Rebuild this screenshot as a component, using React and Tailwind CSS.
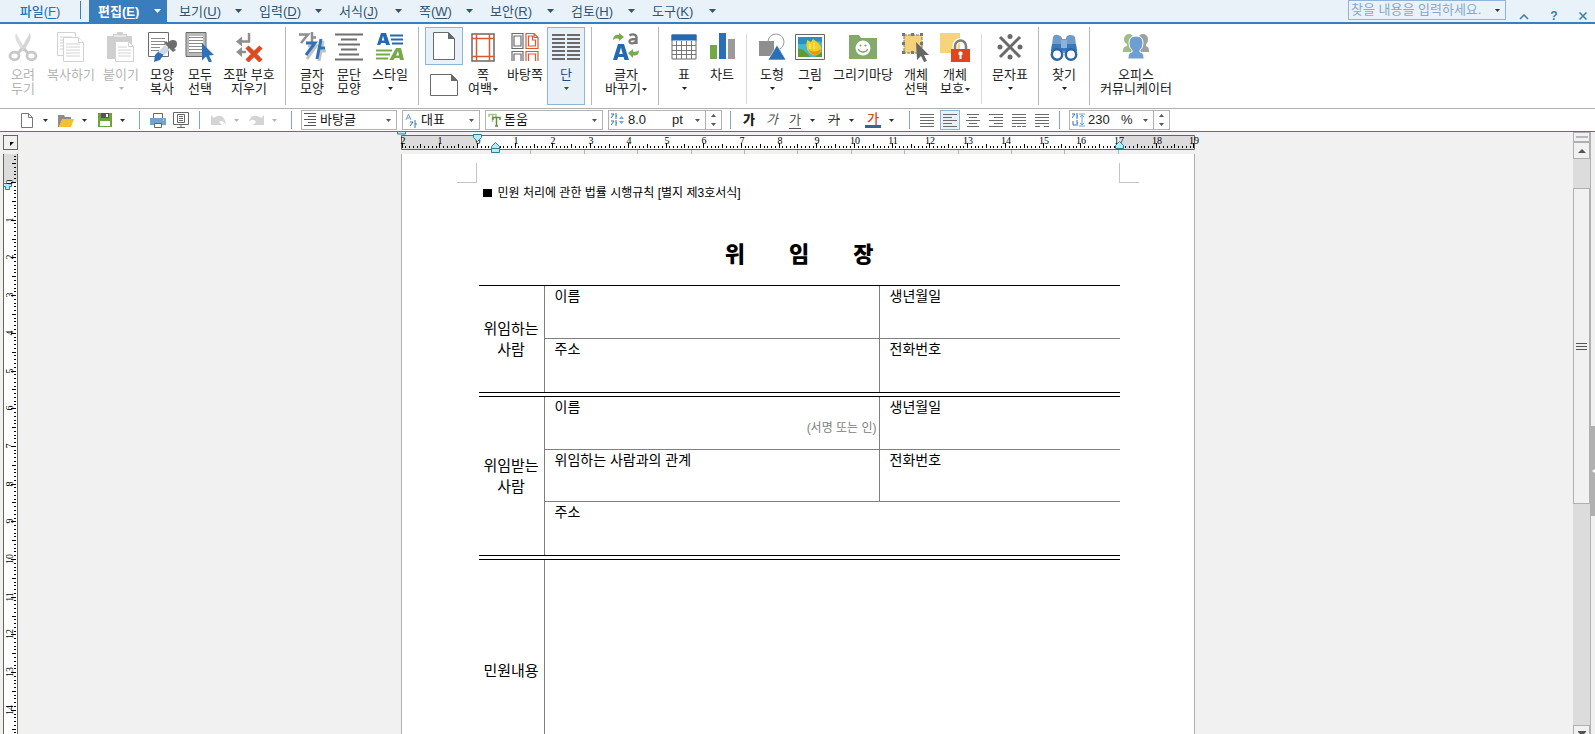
import React, { useState } from 'react';

const CM = 37.7;

const Caret = ({ className = 'text-[#333]' }) => (
    <svg width="5" height="3" viewBox="0 0 5 3" className={`shrink-0 ${className}`}>
        <path d="M0 0h5L2.5 3z" fill="currentColor" />
    </svg>
);

/* ---------- ribbon icons ---------- */

const icons = {
    cut: (
        <svg width="30" height="30" viewBox="0 0 30 30" fill="none">
            <path d="M8 1q-2 4 1 9l5 9 3-2z" fill="#dedede" />
            <path d="M22 1q2 4-1 9l-5 9-3-2z" fill="#d6d6d6" />
            <path d="M14 17l-4 4M16 17l4 4" stroke="#c8c8c8" strokeWidth="3" />
            <ellipse cx="6.500" cy="24" rx="4.500" ry="3.800" stroke="#c8c8c8" strokeWidth="2.800" />
            <ellipse cx="23.500" cy="24" rx="4.500" ry="3.800" stroke="#c8c8c8" strokeWidth="2.800" />
        </svg>
    ),
    copy: (
        <svg width="28" height="30" viewBox="0 0 28 30" fill="#fff" stroke="#d2d2d2">
            <path d="M.5.5h18v23H.5z" />
            <path d="M3 5h12M3 8h12M3 11h12M3 14h12M3 17h12" />
            <path d="M6.500 5.500h15l5 5v19h-20z" />
            <path d="M21.500 5.500v5h5M9 12h14M9 15h14M9 18h14M9 21h14M9 24h14" />
        </svg>
    ),
    paste: (
        <svg width="28" height="30" viewBox="0 0 28 30">
            <path d="M0 4h6V2h4a3 3 0 0 1 6 0h4v2h5v8H9v15H0z" fill="#cfcfcf" />
            <path d="M7 4h12" stroke="#fff" />
            <path d="M8.500 9.500h13l5 5v15h-18z" fill="#fff" stroke="#d2d2d2" />
            <path d="M21.500 9.500v5h5M11 15h9M11 18h13M11 21h13M11 24h13" stroke="#d2d2d2" fill="none" />
        </svg>
    ),
    brush: (
        <svg width="30" height="30" viewBox="0 0 30 30">
            <path d="M1.500.5h20v24h-20z" fill="#fff" stroke="#6a6a6a" />
            <path d="M4 6.500h14M4 9.500h14M4 12.500h14M4 15.500h9M4 18.500h8" stroke="#8a8a8a" />
            <path d="M7 30l1-7 4-4h7l-6 9z" fill="#2f6fb5" />
            <path d="M11 20l7-7 5 5-6 5z" fill="#cdd9e6" />
            <path d="M17 11l2-2 10 9-3 2z" fill="#6d6d6d" />
            <path d="M21 12q1-4 5-4t4 4-4 5z" fill="#6d6d6d" />
        </svg>
    ),
    selectAll: (
        <svg width="30" height="30" viewBox="0 0 30 30">
            <path d="M1 .5h20v24H1z" fill="#b9b9b9" stroke="#6a6a6a" />
            <path d="M4 4h14v17H4z" fill="#fff" />
            <path d="M4 5.500h14M4 8.500h14M4 11.500h14M4 14.500h14M4 17.500h14M4 20.500h14" stroke="#8a8a8a" />
            <path d="M17 11l12 12-5 .5 3 6-3 1-3-6-4 4z" fill="#2f72b8" />
        </svg>
    ),
    clearMarks: (
        <svg width="28" height="30" viewBox="0 0 28 30">
            <path d="M1 9.500l6-5v10zM1 20l6-5v10z" fill="#8f8f8f" />
            <path d="M14 1v8.500H5M5 20h6" stroke="#8f8f8f" strokeWidth="2.500" fill="none" />
            <path d="M12 15l14 14M26 15L12 29" stroke="#dd4a1f" strokeWidth="4.500" />
        </svg>
    ),
    charShape: (
        <svg width="30" height="30" viewBox="0 0 30 30">
            <path d="M2 2.500h9L4 11M15 0v13M15 5.500h4" stroke="#8f8f8f" strokeWidth="2.500" fill="none" />
            <path d="M11 14h8l-9 13M26 9l-4 20M23 19h6" stroke="#c3c3c3" strokeWidth="3" fill="none" />
            <path d="M9 11h9L9 23M24 7l-4 20M22 16h6" stroke="#2f72b8" strokeWidth="3" fill="none" />
        </svg>
    ),
    paraShape: (
        <svg width="28" height="30" viewBox="0 0 28 30">
            <path d="M0 2.500h28M6 7.500h16M3 12.500h22M6 17.500h16M4 22.500h20M0 27.500h28" stroke="#6f6f6f" strokeWidth="2" />
        </svg>
    ),
    style: (
        <svg width="28" height="30" viewBox="0 0 28 30">
            <path fillRule="evenodd" d="M5 1h5l4 12h-4l-.6-2H5l-.7 2H1zM7 4L5.800 8.500h2.600z" fill="#2569b0" />
            <path d="M14 3.500h13M15 7.500h12M16 11.500h11" stroke="#2569b0" strokeWidth="2" />
            <path fillRule="evenodd" d="M20 16h5l3 12h-4l-.6-2h-4.500l-1.500 2h-4zM22 19l-2 4.500h3z" fill="#78a94a" />
            <path d="M0 18.500h16M0 22.500h14M0 26.500h12" stroke="#78a94a" strokeWidth="2" />
        </svg>
    ),
    margin: (
        <svg width="24" height="30" viewBox="0 0 24 30" fill="none">
            <path d="M1 2h22v27H1z" stroke="#6a6a6a" strokeWidth="1.500" />
            <path d="M5.500 2v27M18.500 2v27M1 6.500h22M1 24.500h22" stroke="#d85a35" strokeWidth="1.500" />
        </svg>
    ),
    master: (
        <svg width="28" height="30" viewBox="0 0 28 30" fill="none" strokeWidth="1.200">
            <path d="M1 1.500h11v15H1zM3 4h7v10H3zM1 29V19.500h11V29M3 29v-7h7v7" stroke="#6a6a6a" />
            <path d="M15 1.500h8l4 4v11H15zM17.500 4h4v4h3v6h-7zM23 1.500v4h4M15 29V19.500h12V29M17.500 29v-7h7v7" stroke="#d85a35" />
        </svg>
    ),
    columns: (
        <svg width="28" height="30" viewBox="0 0 28 30">
            <path d="M0 3h13M0 7h13M0 11h13M0 15h13M0 19h13M0 23h13M0 27h13M15 3h13M15 7h13M15 11h13M15 15h13M15 19h13M15 23h13M15 27h13" stroke="#6a6a6a" strokeWidth="2" />
        </svg>
    ),
    replace: (
        <svg width="28" height="30" viewBox="0 0 28 30">
            <path fillRule="evenodd" d="M6 12h6l5 16h-4.500l-1-3H6.200l-1 3H1zM9 15.500L7.200 22h3.500z" fill="#2569b0" />
            <path d="M1 8c0-4 3-6 6-5V1l5 4-5 4V7C4 6 2 7 1 8zM27 18c0 5-3 6-6 5.500V26l-5-5 5-4v2.500c3 .5 5 0 6-1.500z" fill="#78a94a" />
            <path d="M17.500 3.500c3-2 7-1 7 2V12M24 7c-4 0-6.500.5-6.500 2.500s4 3 6.500 0" stroke="#777" strokeWidth="2.300" fill="none" />
        </svg>
    ),
    table: (
        <svg width="26" height="30" viewBox="0 0 26 30" fill="none">
            <path d="M1 3h24v24H1z" fill="#fff" stroke="#6a6a6a" />
            <path d="M.5 2.500h25v6H.5z" fill="#2569b0" />
            <path d="M5.500 9v18M10.500 9v18M15.500 9v18M20.500 9v18M1 13.500h24M1 18.500h24M1 22.500h24" stroke="#777" />
        </svg>
    ),
    chart: (
        <svg width="26" height="30" viewBox="0 0 26 30">
            <path d="M1 13h7v14H1z" fill="#76a746" />
            <path d="M10 1h7v26h-7z" fill="#2a70b6" />
            <path d="M19 7h7v20h-7z" fill="#9a9a9a" />
        </svg>
    ),
    shapes: (
        <svg width="28" height="30" viewBox="0 0 28 30">
            <circle cx="18" cy="10" r="8" fill="#fff" stroke="#9a9a9a" />
            <path d="M1 9h15v15H1z" fill="#8f8f8f" />
            <path d="M19 13l9 15H10z" fill="#2a70b6" stroke="#fff" strokeWidth=".6" />
        </svg>
    ),
    picture: (
        <svg width="30" height="30" viewBox="0 0 30 30">
            <path d="M.5 2.500h29v25H.5z" fill="#fff" stroke="#666" />
            <path d="M3 5h24v20H3z" fill="#45b8cc" />
            <path d="M3 5h24v5c-8-2-14 3-24 2z" fill="#2b8fc4" />
            <path d="M3 25v-8c4-1 7 2 12 8zM20 25l7-5v5z" fill="#5f9a36" />
            <path d="M12 8l4 2 2-3 4 3 2 2q3 3 2 7c-2 5-7 5-10 3q-6-4-4-14z" fill="#f7cf1f" />
            <path d="M13 17q6 5 13 0-1 6-6 6-5-1-7-6z" fill="#e9950f" />
            <path d="M15 12v5M19 11v6" stroke="#fff3a0" />
        </svg>
    ),
    gallery: (
        <svg width="28" height="30" viewBox="0 0 28 30">
            <path d="M0 3h10l2 3h16v21H0z" fill="#84a96c" />
            <circle cx="14" cy="16" r="7.500" fill="#fff" />
            <circle cx="11.500" cy="13.500" r="1.100" fill="#84a96c" />
            <circle cx="16.500" cy="13.500" r="1.100" fill="#84a96c" />
            <path d="M9.500 17c1 4 8 4 9 0" stroke="#84a96c" strokeWidth="1.300" fill="none" />
        </svg>
    ),
    objSelect: (
        <svg width="28" height="30" viewBox="0 0 28 30">
            <path d="M2 3h18v18H2z" fill="#f3d27a" stroke="#777" strokeDasharray="3 1" />
            <path d="M0 1h3v3H0zM9 1h3v3H9zM18 1h3v3h-3zM0 10h3v3H0zM18 10h3v3h-3zM0 19h3v3H0zM9 19h3v3H9z" fill="#777" />
            <path d="M14 10l13 13h-5l3 6-3 1-3-6-4 4z" fill="#666" />
        </svg>
    ),
    objLock: (
        <svg width="30" height="30" viewBox="0 0 30 30">
            <path d="M0 1h20v20H0z" fill="#f5d47c" />
            <path d="M15 18v-4a5.500 5.500 0 0 1 11 0v4" stroke="#fff" strokeWidth="5" fill="none" />
            <path d="M15 19v-5a5.500 5.500 0 0 1 11 0v5" stroke="#7d7d7d" strokeWidth="2.500" fill="none" />
            <path d="M11 17h19v13H11z" fill="#e2441b" />
            <path d="M20.500 19.500a2 2 0 0 1 1 3.800V27h-2v-3.700a2 2 0 0 1 1-3.800z" fill="#fff" />
        </svg>
    ),
    symbols: (
        <svg width="26" height="30" viewBox="0 0 26 30">
            <path d="M3 5l20 20M23 5L3 25" stroke="#6a6a6a" strokeWidth="3" />
            <g fill="#6a6a6a">
                <circle cx="13" cy="4.500" r="2.500" />
                <circle cx="13" cy="25" r="2.500" />
                <circle cx="3" cy="15" r="2.500" />
                <circle cx="23" cy="15" r="2.500" />
            </g>
        </svg>
    ),
    find: (
        <svg width="28" height="30" viewBox="0 0 28 30">
            <path d="M3 5q1-3 5-2t4 4h4q0-4 4-4t5 2l2 16H1z" fill="#6f9bc9" />
            <path d="M2 12h24l1 7H1z" fill="#3a78b8" />
            <path d="M11 8h6v8h-6z" fill="#8db1d8" />
            <circle cx="7" cy="22.500" r="5.200" fill="#fff" stroke="#2b66a6" strokeWidth="2.500" />
            <circle cx="21" cy="22.500" r="5.200" fill="#fff" stroke="#2b66a6" strokeWidth="2.500" />
        </svg>
    ),
    people: (
        <svg width="28" height="30" viewBox="0 0 28 30">
            <path d="M7 2a5 5 0 0 1 5 5q0 4-2 5v8H1c0-5 1-5 4-6v-2q-3-1-3-5a5 5 0 0 1 5-5z" fill="#9fbf87" />
            <path d="M21 2a5 5 0 0 1 5 5q0 4-2 5v2c2 1 3 1 3 6h-9v-8q-2-1-2-5a5 5 0 0 1 5-5z" fill="#a0a0a0" />
            <path d="M14 4q7 0 7 7 0 5-3 7v2c3 1 4 2 4 7H6c0-5 1-6 4-7v-2q-3-2-3-7 0-7 7-7z" fill="#6e9fd0" stroke="#fff" />
        </svg>
    ),
};

/* ---------- data ---------- */

const menus = [
    { name: '보기', key: 'U', width: 'w-20' },
    { name: '입력', key: 'D', width: 'w-20' },
    { name: '서식', key: 'J', width: 'w-20' },
    { name: '쪽', key: 'W', width: 'w-[71px]' },
    { name: '보안', key: 'R', width: 'w-[81px]' },
    { name: '검토', key: 'H', width: 'w-[81px]' },
    { name: '도구', key: 'K', width: 'w-[81px]' },
];

const editGroup = [
    { icon: 'cut', lines: ['오려', '두기'], width: 'w-[46px]', disabled: true },
    { icon: 'copy', lines: ['복사하기'], width: 'w-[50px]', disabled: true },
    { icon: 'paste', lines: ['붙이기'], width: 'w-[50px]', disabled: true, caret: 'below' },
    { icon: 'brush', lines: ['모양', '복사'], width: 'w-8' },
    { icon: 'selectAll', lines: ['모두', '선택'], width: 'w-11' },
    { icon: 'clearMarks', lines: ['조판 부호', '지우기'], width: 'w-[54px]' },
];

const shapeGroup = [
    { icon: 'charShape', lines: ['글자', '모양'], width: 'w-9' },
    { icon: 'paraShape', lines: ['문단', '모양'], width: 'w-[38px]' },
    { icon: 'style', lines: ['스타일'], width: 'w-11', caret: 'below' },
];

const pageGroup = [
    { icon: 'margin', lines: ['쪽', '여백'], width: 'w-10', caret: 'inline' },
    { icon: 'master', lines: ['바탕쪽'], width: 'w-11' },
    { icon: 'columns', lines: ['단'], width: 'w-[38px]', caret: 'below', active: true },
];

const objectGroup = [
    { icon: 'shapes', lines: ['도형'], width: 'w-10', caret: 'below' },
    { icon: 'picture', lines: ['그림'], width: 'w-9', caret: 'below' },
    { icon: 'gallery', lines: ['그리기마당'], width: 'w-[70px]' },
    { icon: 'objSelect', lines: ['개체', '선택'], width: 'w-9' },
    { icon: 'objLock', lines: ['개체', '보호'], width: 'w-[42px]', caret: 'inline' },
];

/* ---------- ribbon ---------- */

function RibbonButton({ icon, lines, width, caret, disabled, active }) {
    const color = disabled ? 'text-[#b4b4b4]' : active ? 'text-[#1f4e79]' : 'text-[#222]';
    return (
        <button
            type="button"
            disabled={disabled}
            className={`h-[78px] shrink-0 flex flex-col items-center border text-[13px] leading-[14px] whitespace-nowrap ${width} ${color} ${active ? 'bg-[#e9f1f8] border-[#8fb4d6]' : 'border-transparent'}`}
        >
            <span className="mt-1 mb-[6px] h-[30px] flex items-center">{icons[icon]}</span>
            {lines.map((line, i) => (
                <span key={line} className="flex items-center gap-px">
                    {line}
                    {caret === 'inline' && i === lines.length - 1 && <Caret />}
                </span>
            ))}
            {caret === 'below' && (
                <span className="h-3 flex items-center">
                    <Caret className="" />
                </span>
            )}
        </button>
    );
}

const RibbonGroup = ({ items, className = '' }) => (
    <div className={`flex shrink-0 ${className}`}>
        {items.map((item) => <RibbonButton key={item.icon} {...item} />)}
    </div>
);

const Divider = () => <div className="w-px h-[78px] shrink-0 bg-[#b8b8b8]" />;
const LightDivider = () => <div className="w-px h-[70px] mt-[7px] shrink-0 bg-[#d8d8d8]" />;

function Ribbon() {
    return (
        <div className="h-[84px] pt-[3px] flex items-start bg-white">
            <RibbonGroup items={editGroup} className="pr-[9px]" />
            <Divider />
            <RibbonGroup items={shapeGroup} className="pl-2 pr-[6px]" />
            <Divider />
            <div className="flex shrink-0 px-[6px]">
                <div className="w-[38px] flex flex-col items-center">
                    <button type="button" aria-label="세로" className="w-[38px] h-[38px] flex items-center justify-center bg-[#e9f1f8] border border-[#8fb4d6]">
                        <svg width="22" height="28" viewBox="0 0 22 28">
                            <path d="M.5.5h15l6 6v21H.5z" fill="#fff" stroke="#6a6a6a" />
                            <path d="M15 0v7h7z" fill="#6a6a6a" />
                        </svg>
                    </button>
                    <button type="button" aria-label="가로" className="w-[38px] h-10 flex items-center justify-center">
                        <svg width="28" height="22" viewBox="0 0 28 22">
                            <path d="M.5.5h21l6 6v15H.5z" fill="#fff" stroke="#6a6a6a" />
                            <path d="M21 0v7h7z" fill="#6a6a6a" />
                        </svg>
                    </button>
                </div>
                <RibbonGroup items={pageGroup} />
            </div>
            <Divider />
            <RibbonGroup items={[{ icon: 'replace', lines: ['글자', '바꾸기'], width: 'w-[54px]', caret: 'inline' }]} className="pl-[7px] pr-[5px]" />
            <Divider />
            <RibbonGroup
                items={[
                    { icon: 'table', lines: ['표'], width: 'w-10', caret: 'below' },
                    { icon: 'chart', lines: ['차트'], width: 'w-9' },
                ]}
                className="pl-[5px] pr-[6px]"
            />
            <LightDivider />
            <RibbonGroup items={objectGroup} className="px-[5px]" />
            <LightDivider />
            <RibbonGroup items={[{ icon: 'symbols', lines: ['문자표'], width: 'w-11', caret: 'below' }]} className="px-[6px]" />
            <Divider />
            <RibbonGroup items={[{ icon: 'find', lines: ['찾기'], width: 'w-10', caret: 'below' }]} className="px-[5px]" />
            <Divider />
            <RibbonGroup items={[{ icon: 'people', lines: ['오피스', '커뮤니케이터'], width: 'w-20' }]} className="pl-[6px]" />
        </div>
    );
}

/* ---------- menu bar ---------- */

const BigCaret = () => (
    <svg width="7" height="4" viewBox="0 0 7 4" className="shrink-0">
        <path d="M0 0h7L3.500 4z" fill="currentColor" />
    </svg>
);

const MenuLabel = ({ name, hotkey }) => (
    <span className="pt-[2px]">{name}(<span className="underline underline-offset-2">{hotkey}</span>)</span>
);

function MenuBar() {
    return (
        <nav className="h-6 flex items-start bg-[#eaf2f9] border-b-2 border-[#3a7dbd] text-[13px] leading-5 text-[#2f5573]">
            <button type="button" className="w-20 h-[22px] flex items-center justify-center text-[#2273b8] font-medium">
                <MenuLabel name="파일" hotkey="F" />
            </button>
            <div className="w-px h-[18px] mt-px bg-[#3a7dbd]" />
            <button type="button" className="ml-2 mr-[9px] w-[78px] h-[22px] pl-[9px] pr-[6px] flex items-center justify-between bg-[#3a7dbd] text-white font-bold">
                <MenuLabel name="편집" hotkey="E" />
                <BigCaret />
            </button>
            {menus.map((m) => (
                <button key={m.key} type="button" className={`h-[22px] pl-[3px] pr-[14px] flex items-center justify-between ${m.width}`}>
                    <MenuLabel name={m.name} hotkey={m.key} />
                    <BigCaret />
                </button>
            ))}
            <div className="ml-auto mr-2 flex items-start text-[#3a7dad]">
                <label className="w-[158px] h-5 pl-[2px] pr-[5px] flex items-center border border-[#8fb4d6]">
                    <input aria-label="찾을 내용" placeholder="찾을 내용을 입력하세요." className="w-full min-w-0 bg-transparent outline-none placeholder:text-[#86a9cb]" />
                    <Caret />
                </label>
                <button type="button" aria-label="접기" className="ml-[13px] mt-[13px] h-2">
                    <svg width="10" height="6" viewBox="0 0 10 6" fill="none" className="block"><path d="M1 5l4-4 4 4" stroke="currentColor" strokeWidth="1.500" /></svg>
                </button>
                <button type="button" className="ml-5 mt-[6px] w-[10px] h-4 leading-5 text-xs font-bold">?</button>
                <button type="button" aria-label="닫기" className="ml-5 mt-3 h-2">
                    <svg width="8" height="8" viewBox="0 0 8 8" className="block"><path d="M.5.5l7 7M7.500.5l-7 7" stroke="currentColor" strokeWidth="1.500" /></svg>
                </button>
            </div>
        </nav>
    );
}

/* ---------- format bar ---------- */

const BlueDivider = () => <div className="w-px h-[18px] shrink-0 bg-[#7ea6c9]" />;

const IconButton = ({ label, className = '', children }) => (
    <button type="button" aria-label={label} className={`h-5 shrink-0 flex items-center justify-center ${className}`}>
        {children}
    </button>
);

function Combo({ label, value, width, icon }) {
    return (
        <div className={`h-5 shrink-0 flex items-center border border-[#b0b4b8] pl-[2px] pr-[5px] ${width}`}>
            {icon}
            <select aria-label={label} defaultValue={value} className="flex-1 min-w-0 appearance-none bg-transparent pl-[3px] outline-none text-[#111]">
                <option>{value}</option>
            </select>
            <Caret className="text-[#555]" />
        </div>
    );
}

function Spin({ label, value, unit, icon, inputWidth, width }) {
    const [text, setText] = useState(value);
    return (
        <div className={`h-5 shrink-0 flex items-center border border-[#b0b4b8] pl-[2px] ${width}`}>
            {icon}
            <input aria-label={label} value={text} onChange={(e) => setText(e.target.value)} className={`pl-[3px] outline-none bg-transparent text-[#222] ${inputWidth}`} />
            <span>{unit}</span>
            <span className="ml-auto mr-[5px] flex"><Caret className="text-[#555]" /></span>
            <span className="w-4 h-[18px] flex flex-col items-center justify-between py-[3px] border-l border-[#b0b4b8]">
                <button type="button" aria-label={`${label} 늘리기`} className="h-1 flex">
                    <svg width="5" height="3" viewBox="0 0 5 3"><path d="M0 3h5L2.500 0z" fill="#555" /></svg>
                </button>
                <button type="button" aria-label={`${label} 줄이기`} className="h-1 flex items-end"><Caret className="text-[#555]" /></button>
            </span>
        </div>
    );
}

const alignments = [
    { name: '양쪽', d: 'M0 1.500h14M0 4.500h14M0 7.500h14M0 10.500h14M0 13.500h14' },
    { name: '왼쪽', d: 'M0 1.500h14M0 4.500h9M0 7.500h14M0 10.500h9M0 13.500h14' },
    { name: '가운데', d: 'M1 1.500h12M3 4.500h8M0 7.500h14M3 10.500h8M1 13.500h12' },
    { name: '오른쪽', d: 'M0 1.500h14M5 4.500h9M0 7.500h14M5 10.500h9M0 13.500h14' },
    { name: '배분', d: 'M0 1.500h14M0 4.500h14M0 7.500h14M0 10.500h14M0 13.500h4M5 13.500h4M10 13.500h4' },
    { name: '나눔', d: 'M0 1.500h14M0 4.500h14M0 7.500h14M0 10.500h14M0 13.500h5M9 13.500h5' },
];

function FormatBar() {
    return (
        <div className="h-6 flex items-center bg-white border-t border-t-[#b0b0b0] border-b border-b-[#3a7d9f] text-[13px] leading-4 text-[#222]">
            <IconButton label="새 문서" className="ml-[21px] w-3">
                <svg width="12" height="15" viewBox="0 0 12 15"><path d="M.5.5h7l4 4v10H.5zM7.500.5v4h4" fill="#fff" stroke="#777" /></svg>
            </IconButton>
            <IconButton label="새 문서 목록" className="w-[25px]"><Caret /></IconButton>
            <IconButton label="열기" className="w-4">
                <svg width="16" height="13" viewBox="0 0 16 13">
                    <path d="M0 1h6l1 2h6v3H4L1 13H0z" fill="#8c8c8c" />
                    <path d="M4 5h12l-3 8H1z" fill="#f6bf32" />
                </svg>
            </IconButton>
            <IconButton label="열기 목록" className="w-5"><Caret /></IconButton>
            <IconButton label="저장" className="ml-1 w-[14px]">
                <svg width="14" height="14" viewBox="0 0 14 14">
                    <path d="M0 0h14v14H0z" fill="#6ca33c" />
                    <path d="M3 0h8v5H3z" fill="#555" />
                    <path d="M8 1h2v3H8zM2 8h10v5H2z" fill="#fff" />
                </svg>
            </IconButton>
            <IconButton label="저장 목록" className="w-5 mr-[7px]"><Caret /></IconButton>
            <BlueDivider />
            <IconButton label="인쇄" className="ml-[10px] w-4">
                <svg width="16" height="15" viewBox="0 0 16 15">
                    <path d="M3.500.5h9v5h-9z" fill="#fff" stroke="#666" />
                    <path d="M0 5h16v7H0z" fill="#74a2cf" />
                    <path d="M4.500 10.500h7v4h-7z" fill="#fff" stroke="#666" />
                    <path d="M13 7h1" stroke="#f6d24a" strokeWidth="2" />
                </svg>
            </IconButton>
            <IconButton label="미리 보기" className="ml-[7px] mr-[10px] w-4">
                <svg width="16" height="16" viewBox="0 0 16 16" fill="none">
                    <path d="M.5.500h15v12H.5zM4.500 2.500h7v8h-7zM6 4.500h4M6 6.500h4M6 8.500h4M4 15.500h8M8 13v2" stroke="#666" />
                </svg>
            </IconButton>
            <BlueDivider />
            <IconButton label="되돌리기" className="ml-[11px] w-4">
                <svg width="16" height="12" viewBox="0 0 16 12"><path d="M0 11V1l3 3c5-4 11-3 12 7-2-4-5-5-7-3l3 3z" fill="#d4d4d4" /></svg>
            </IconButton>
            <IconButton label="되돌리기 목록" className="w-[18px]"><Caret className="text-[#b4b4b4]" /></IconButton>
            <IconButton label="다시 실행" className="ml-1 w-4">
                <svg width="16" height="12" viewBox="0 0 16 12"><path d="M15 11V1l-3 3C7 0 1 1 0 8c2-3 5-3 7 0l-3 3z" fill="#d4d4d4" /></svg>
            </IconButton>
            <IconButton label="다시 실행 목록" className="w-[18px] mr-2"><Caret className="text-[#b4b4b4]" /></IconButton>
            <BlueDivider />

            <div className="ml-[9px] mr-2 flex gap-[5px]">
                <Combo
                    label="스타일"
                    value="바탕글"
                    width="w-24"
                    icon={<svg width="13" height="14" viewBox="0 0 13 14"><path d="M0 .5h12M4 3.500h8M0 6.500h12M4 9.500h8M0 12.500h12" stroke="#555" /></svg>}
                />
                <Combo
                    label="언어"
                    value="대표"
                    width="w-[78px]"
                    icon={
                        <svg width="13" height="15" viewBox="0 0 13 15" fill="none">
                            <path d="M1 7l2.500-6L6 7M2 5h3" stroke="#6aa6dc" />
                            <path d="M5 9h3l-3 4M10 7v8M10 11h2" stroke="#2f72b8" />
                        </svg>
                    }
                />
                <Combo
                    label="글꼴"
                    value="돋움"
                    width="w-[118px]"
                    icon={
                        <svg width="13" height="14" viewBox="0 0 13 14" fill="none">
                            <path d="M1 4V1.500h7V4M4.500 1v8" stroke="#a9c88f" strokeWidth="1.500" />
                            <path d="M5 7V4.500h7V7M8.500 4v9M7 13h3" stroke="#5d9138" strokeWidth="1.500" />
                        </svg>
                    }
                />
                <Spin
                    label="글자 크기"
                    value="8.0"
                    unit="pt"
                    width="w-[114px]"
                    inputWidth="w-[47px]"
                    icon={
                        <svg width="14" height="14" viewBox="0 0 14 14" fill="none">
                            <path d="M0 1h3L0 5M5 0v6M5 3h1M0 8h3l-3 4M5 7v6M5 10h1" stroke="#2f72b8" />
                            <path d="M8 6l2.500-3L13 6zM8 8l2.500 3L13 8z" fill="#6aa6dc" />
                        </svg>
                    }
                />
            </div>
            <BlueDivider />
            <IconButton label="진하게" className="ml-[11px] w-[14px] font-black">가</IconButton>
            <IconButton label="기울임" className="ml-[9px] w-[14px] italic text-[#555]">가</IconButton>
            <IconButton label="밑줄" className="ml-[9px] w-[14px] text-[#555] underline underline-offset-4">가</IconButton>
            <IconButton label="밑줄 목록" className="w-5"><Caret /></IconButton>
            <IconButton label="취소선" className="ml-[5px] w-[14px] text-[#444] line-through">가</IconButton>
            <IconButton label="취소선 목록" className="w-5"><Caret /></IconButton>
            <IconButton label="글자 색" className="ml-1 w-4">
                <span className="w-4 h-4 border-b-[3px] border-[#3a6098] text-[#d8481f] font-medium leading-[14px]">가</span>
            </IconButton>
            <IconButton label="글자 색 목록" className="w-5 mr-2"><Caret /></IconButton>
            <BlueDivider />
            <div className="ml-[7px] mr-[7px] flex gap-[3px]">
                {alignments.map((a, i) => (
                    <IconButton key={a.name} label={a.name} className={`w-5 border ${i === 1 ? 'bg-[#e9f1f8] border-[#8fb4d6]' : 'border-transparent'}`}>
                        <svg width="14" height="15" viewBox="0 0 14 15"><path d={a.d} stroke="#6a6a6a" /></svg>
                    </IconButton>
                ))}
            </div>
            <BlueDivider />
            <div className="ml-[9px]">
                <Spin
                    label="줄 간격"
                    value="230"
                    unit="%"
                    width="w-[101px]"
                    inputWidth="w-9"
                    icon={
                        <svg width="13" height="14" viewBox="0 0 13 14" fill="none">
                            <path d="M0 1h3L0 5M5 0v6M5 3h1M1 8v4h3M5 7v6M5 10h1" stroke="#2f72b8" />
                            <path d="M7 1h6M7 13h6M10 2v10M8 4l2-2 2 2M8 10l2 2 2-2" stroke="#6aa6dc" />
                        </svg>
                    }
                />
            </div>
        </div>
    );
}

/* ---------- rulers ---------- */

// marks in tenths of a centimetre; whole centimetres carry a number
const range = (from, to) => Array.from({ length: to - from + 1 }, (_, i) => from + i);
const tickLength = (i) => (i % 10 === 0 ? 5 : i % 5 === 0 ? 4 : 2);

function HorizontalRuler() {
    const x0 = 76;
    const w = 794;
    return (
        <svg width={w} height="22" viewBox={`0 0 ${w} 22`} className="block mx-auto shrink-0 overflow-visible">
            <path d={`M.5 3.500h${w - 1}v14H.5z`} fill="#fff" stroke="#66665e" />
            <path d={`M1 4h${x0 - 1}v13H1zM718 4h75v13h-75z`} fill="#dcdcdc" />
            {range(-20, 190).map((i) => {
                const x = Math.round(x0 + (i * CM) / 10) + 0.5;
                return <path key={i} d={`M${x} ${16 - tickLength(i)}V16`} stroke="#000" />;
            })}
            {range(-2, 19).map((n) => (
                <text key={n} x={Math.round(x0 + n * CM) + 1} y="12" textAnchor="middle" fontSize="10" className="font-['Liberation_Serif',serif]">
                    {Math.abs(n)}
                </text>
            ))}
            {range(1, 12).map((n) => (
                <path key={n} d={`M${Math.round(x0 + n * 53.400)}.5 18v4`} stroke="#b4b4b4" />
            ))}
            <path d="M-3.500 0v2h8V0" fill="#bfe9f2" stroke="#2b7f9a" />
            <path d="M72.500 2.500h8v3l-4 4-4-4z" fill="#bfe9f2" stroke="#2b7f9a" />
            <path d="M90.500 20.500v-6l4-4 4 4v6zM90.500 16.500h8" fill="#bfe9f2" stroke="#2b7f9a" />
            <path d="M714.500 16.500v-3l4-4 4 4v3z" fill="#bfe9f2" stroke="#2b7f9a" />
        </svg>
    );
}

function VerticalRuler() {
    const y0 = 28;
    return (
        <svg width="15" height="700" viewBox="0 0 15 700" className="block mt-1 shrink-0">
            <path d="M0 0h15v700H0z" fill="#fff" />
            <path d={`M0 0h15v${y0}H0z`} fill="#dcdcdc" />
            {range(-7, 170).map((i) => {
                const y = Math.round(y0 + (i * CM) / 10) + 0.5;
                return <path key={i} d={`M${13 - tickLength(i)} ${y}h${tickLength(i)}`} stroke="#000" />;
            })}
            <path d="M.5 29.500h8v3h-2v3h-4v-3h-2z" fill="#bfe9f2" stroke="#2b7f9a" />
            {range(0, 14).map((n) => {
                const y = Math.round(y0 + n * CM);
                return (
                    <text key={n} x="10" y={y} transform={`rotate(-90 10 ${y})`} textAnchor="middle" fontSize="10" className="font-['Liberation_Serif',serif]">
                        {n}
                    </text>
                );
            })}
            <path d="M.5 0v700M14.500 0v700" stroke="#66665e" />
        </svg>
    );
}

/* ---------- document ---------- */

const cell = 'px-[10px] align-top border-[#808080] text-sm leading-5';

const FormTable = ({ children }) => (
    <table className="w-full table-fixed border-separate border-spacing-0 border-y border-black">
        <colgroup>
            <col className="w-[66px]" />
            <col />
            <col className="w-[240px]" />
        </colgroup>
        <tbody>{children}</tbody>
    </table>
);

const RowHead = ({ rowSpan, children }) => (
    <th scope="rowgroup" rowSpan={rowSpan} className="border-r border-[#808080] text-[15px] leading-[21px] font-normal align-middle whitespace-nowrap">
        {children}
    </th>
);

function Paper() {
    return (
        <article className="w-[794px] flex-1 mx-auto bg-white border-x border-[#b0b0b0] text-black">
            <div className="pt-[9px] px-[55px] flex justify-between">
                <div className="w-5 h-5 border-r border-b border-[#c4c4c4]" />
                <div className="w-5 h-5 border-l border-b border-[#c4c4c4]" />
            </div>
            <div className="pl-[77px] pr-[74px]">
                <p className="pl-1 flex items-center gap-[6px] text-xs leading-5">
                    <span className="w-[9px] h-2 bg-black" />
                    민원 처리에 관한 법률 시행규칙 [별지 제3호서식]
                </p>
                <h1 className="pt-9 pb-[14px] flex justify-center gap-11 text-[22px] leading-[32px] font-black">
                    <span>위</span>
                    <span>임</span>
                    <span>장</span>
                </h1>
                <div className="flex flex-col gap-[3px]">
                    <FormTable>
                        <tr className="h-[53px]">
                            <RowHead rowSpan={2}>위임하는<br />사람</RowHead>
                            <td className={`${cell} border-r border-b`}>이름</td>
                            <td className={`${cell} border-b`}>생년월일</td>
                        </tr>
                        <tr className="h-[53px]">
                            <td className={`${cell} border-r`}>주소</td>
                            <td className={cell}>전화번호</td>
                        </tr>
                    </FormTable>
                    <FormTable>
                        <tr className="h-[53px]">
                            <RowHead rowSpan={3}>위임받는<br />사람</RowHead>
                            <td className={`${cell} border-r border-b`}>
                                이름
                                <div className="-mr-2 pt-px text-right text-xs leading-5 text-[#808080]">(서명 또는 인)</div>
                            </td>
                            <td className={`${cell} border-b`}>생년월일</td>
                        </tr>
                        <tr className="h-[52px]">
                            <td className={`${cell} border-r border-b`}>위임하는 사람과의 관계</td>
                            <td className={`${cell} border-b`}>전화번호</td>
                        </tr>
                        <tr className="h-[53px]">
                            <td colSpan={2} className={cell}>주소</td>
                        </tr>
                    </FormTable>
                    <FormTable>
                        <tr className="h-[220px]">
                            <RowHead>민원내용</RowHead>
                            <td colSpan={2} className={cell} />
                        </tr>
                    </FormTable>
                </div>
            </div>
        </article>
    );
}

function ScrollBar() {
    return (
        <div className="w-[22px] shrink-0 flex">
            <div className="w-[18px] flex flex-col bg-[#dcdcdc] border-r border-[#b0b0b0]">
                <div className="h-[10px] flex items-center justify-center bg-[#f1f1f1] border border-[#b0b0b0]">
                    <div className="w-3 h-[2px] bg-[#b8b8b8]" />
                </div>
                <button type="button" aria-label="위로" className="h-[17px] shrink-0 flex items-center justify-center bg-[#f1f1f1] border border-[#b0b0b0]">
                    <svg width="8" height="4" viewBox="0 0 8 4"><path d="M0 4h8L4 0z" fill="#555" /></svg>
                </button>
                <div className="h-[316px] mt-[29px] flex flex-col items-center justify-center gap-[2px] bg-[#f1f1f1] border border-[#b0b0b0]">
                    <div className="w-[11px] h-px bg-[#555]" />
                    <div className="w-[11px] h-px bg-[#555]" />
                    <div className="w-[11px] h-px bg-[#555]" />
                </div>
                <button type="button" aria-label="아래로" className="mt-auto h-[9px] shrink-0 flex items-end justify-center bg-[#f1f1f1] border-x border-t border-[#b0b0b0]">
                    <svg width="8" height="3" viewBox="0 0 8 3"><path d="M0 0h8v1L6 3H2L0 1z" fill="#555" /></svg>
                </button>
            </div>
            <button type="button" aria-label="작업 창" className="flex-1 h-[90px] mt-[294px] flex items-center justify-end bg-[#b0b0b0]">
                <svg width="3" height="4" viewBox="0 0 3 4"><path d="M3 0v4L0 2z" fill="#fff" /></svg>
            </button>
        </div>
    );
}

export default function App() {
    return (
        <div className="h-screen flex flex-col overflow-hidden bg-[#f1f1f1] font-['Liberation_Sans','Noto_Sans_CJK_KR',sans-serif]">
            <header className="shrink-0">
                <MenuBar />
                <Ribbon />
                <FormatBar />
            </header>
            <main className="flex-1 min-h-0 flex">
                <div className="w-[18px] shrink-0 pl-[3px] pt-[3px] overflow-hidden">
                    <button type="button" aria-label="탭 종류" className="w-[15px] h-[15px] flex items-end justify-end p-[3px] border border-[#66665e]">
                        <svg width="4" height="4" viewBox="0 0 4 4"><path d="M0 0h4L0 4z" fill="#000" /></svg>
                    </button>
                    <VerticalRuler />
                </div>
                <div className="flex-1 min-w-0 pl-1 flex flex-col overflow-hidden">
                    <HorizontalRuler />
                    <Paper />
                </div>
                <ScrollBar />
            </main>
        </div>
    );
}
